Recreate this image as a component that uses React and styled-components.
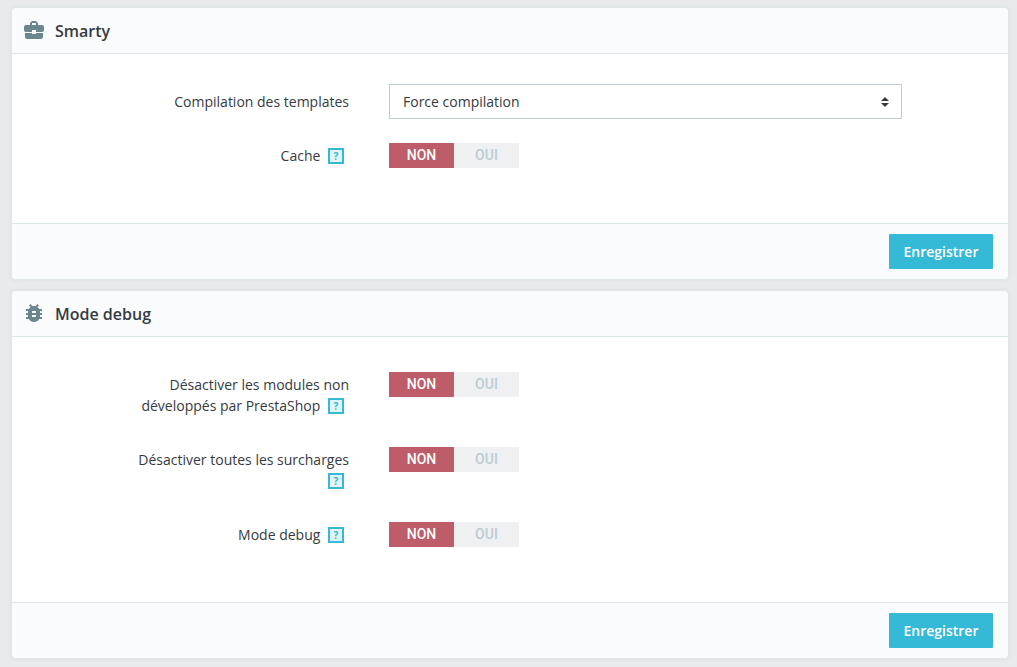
import React, { useState } from "react";
import styled, { createGlobalStyle } from "styled-components";
import { MdBusinessCenter } from "react-icons/md";

const GlobalStyle = createGlobalStyle`
  *, *::before, *::after {
    box-sizing: border-box;
  }
  body {
    margin: 0;
    background-color: #e9eaec;
    color: #363a41;
    font-family: "Open Sans", sans-serif;
    font-size: 14px;
    line-height: 21px;
  }
`;

const Page = styled.main`
  display: flex;
  flex-direction: column;
  gap: 10px;
  padding: 7px 8px 8px 11px;
`;

const Card = styled.form`
  border: 1px solid #dfe8ea;
  border-radius: 5px;
  background-color: white;
  box-shadow: 0 0 4px rgba(0, 0, 0, 0.06);
  overflow: hidden;
`;

const CardHeader = styled.header`
  display: flex;
  align-items: flex-start;
  gap: 9px;
  height: 46px;
  padding: 10px 10px 0;
  border-bottom: 1px solid #dbe6e9;
  background-color: #fafbfc;
  color: #6c868e;
`;

const CardTitle = styled.h2`
  margin: 0;
  color: #363a41;
  font-size: 16px;
  font-weight: 600;
  line-height: 26px;
`;

const CardBody = styled.div`
  display: flex;
  flex-direction: column;
  gap: 19px;
  padding: 30px 106px 50px 121px;
`;

const CardFooter = styled.footer`
  display: flex;
  justify-content: flex-end;
  padding: 10px 15px;
  border-top: 1px solid #dbe6e9;
  background-color: #fafbfc;
`;

const SaveButton = styled.button`
  min-width: 104px;
  height: 35px;
  padding: 0 14px;
  border: none;
  border-radius: 1px;
  background-color: #34b9d7;
  color: white;
  font: inherit;
  font-weight: 600;
  cursor: pointer;
  &:hover {
    background-color: #25a0bc;
  }
`;

const Row = styled.div`
  display: grid;
  grid-template-columns: 8fr 19fr;
  column-gap: 40px;
  align-items: start;
`;

const LabelCell = styled.div`
  padding: 7px 0;
  text-align: right;
`;

const HelpButton = styled.button`
  width: 16px;
  height: 16px;
  margin: 0 5px 0 4px;
  padding: 0;
  border: 2px solid #34b9d7;
  background-color: #e0f4f9;
  color: #34b9d7;
  font-family: inherit;
  font-size: 10px;
  font-weight: 700;
  line-height: 12px;
  vertical-align: 1px;
  cursor: pointer;
`;

const SelectBox = styled.div`
  position: relative;
`;

const Select = styled.select`
  display: block;
  width: 100%;
  height: 35px;
  padding: 0 32px 0 13px;
  border: 1px solid #bbcdd2;
  border-radius: 0;
  background-color: white;
  color: #363a41;
  font: inherit;
  appearance: none;
`;

const SelectArrows = styled.svg`
  position: absolute;
  top: 12px;
  right: 12px;
  pointer-events: none;
`;

const SwitchGroup = styled.div`
  display: flex;
  padding-top: 5px;
`;

const SwitchInput = styled.input`
  position: absolute;
  opacity: 0;
  pointer-events: none;
`;

const SwitchOption = styled.label`
  width: 65px;
  height: 25px;
  background-color: ${({ $active, $on }) => ($active ? ($on ? "#78d07d" : "#bf5c6a") : "#eff0f2")};
  color: ${({ $active }) => ($active ? "white" : "#bbcdd2")};
  font-family: Roboto, Arial, sans-serif;
  font-weight: 500;
  line-height: 25px;
  text-align: center;
  cursor: pointer;
`;

function BugIcon() {
  return (
    <svg width="24" height="24" viewBox="0 0 24 24" fill="currentColor" aria-hidden="true">
      <path d="M20 8h-2.81c-.45-.78-1.07-1.45-1.82-1.96L17 4.41 15.59 3l-2.17 2.17C12.96 5.06 12.49 5 12 5c-.49 0-.96.06-1.41.17L8.41 3 7 4.41l1.62 1.63C7.88 6.55 7.26 7.22 6.81 8H4v2h2.09c-.05.33-.09.66-.09 1v1H4v2h2v1c0 .34.04.67.09 1H4v2h2.81c1.04 1.79 2.97 3 5.19 3s4.15-1.21 5.19-3H20v-2h-2.09c.05-.33.09-.66.09-1v-1h2v-2h-2v-1c0-.34-.04-.67-.09-1H20V8zm-6 8h-4v-2h4v2zm0-4h-4v-2h4v2z" />
    </svg>
  );
}

function Panel({ icon, title, children }) {
  return (
    <Card onSubmit={(e) => e.preventDefault()}>
      <CardHeader>
        {icon}
        <CardTitle>{title}</CardTitle>
      </CardHeader>
      <CardBody>{children}</CardBody>
      <CardFooter>
        <SaveButton type="submit">Enregistrer</SaveButton>
      </CardFooter>
    </Card>
  );
}

function SwitchRow({ name, label }) {
  const [on, setOn] = useState(false);

  return (
    <Row>
      <LabelCell>
        <span id={`${name}-label`}>{label}</span>{" "}
        <HelpButton type="button" aria-label={`Aide : ${label}`}>
          ?
        </HelpButton>
      </LabelCell>
      <SwitchGroup role="radiogroup" aria-labelledby={`${name}-label`}>
        <SwitchInput type="radio" id={`${name}-off`} name={name} checked={!on} onChange={() => setOn(false)} />
        <SwitchOption htmlFor={`${name}-off`} $active={!on}>
          NON
        </SwitchOption>
        <SwitchInput type="radio" id={`${name}-on`} name={name} checked={on} onChange={() => setOn(true)} />
        <SwitchOption htmlFor={`${name}-on`} $active={on} $on>
          OUI
        </SwitchOption>
      </SwitchGroup>
    </Row>
  );
}

export default function App() {
  return (
    <>
      <GlobalStyle />
      <Page>
        <Panel icon={<MdBusinessCenter size={24} />} title="Smarty">
          <Row>
            <LabelCell>
              <label htmlFor="compilation">Compilation des templates</label>
            </LabelCell>
            <SelectBox>
              <Select id="compilation">
                <option>Force compilation</option>
              </Select>
              <SelectArrows width="9" height="11" viewBox="0 0 9 11" fill="#363a41" aria-hidden="true">
                <path d="M4 1 8 5H0zM4 11 0 7h8z" />
              </SelectArrows>
            </SelectBox>
          </Row>
          <SwitchRow name="cache" label="Cache" />
        </Panel>
        <Panel icon={<BugIcon />} title="Mode debug">
          <SwitchRow name="modules" label="Désactiver les modules non développés par PrestaShop" />
          <SwitchRow name="overrides" label="Désactiver toutes les surcharges" />
          <SwitchRow name="debug" label="Mode debug" />
        </Panel>
      </Page>
    </>
  );
}
